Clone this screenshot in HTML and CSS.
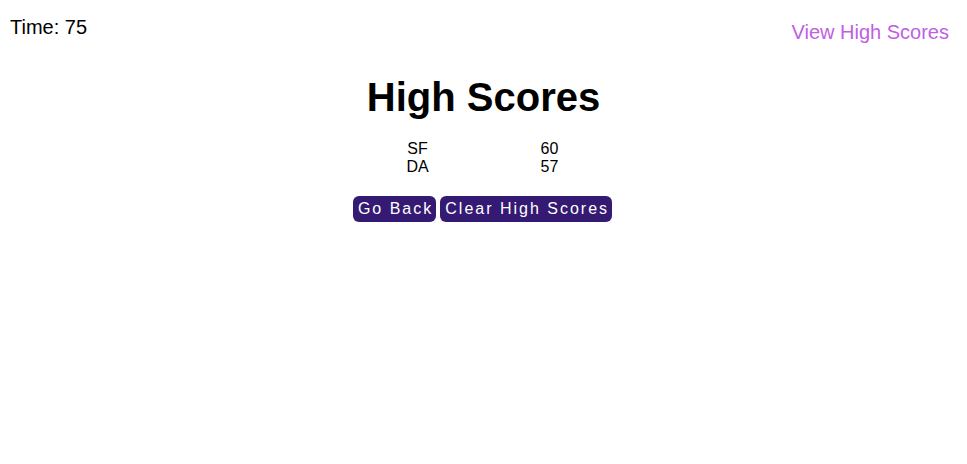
FILE: index.html
```html
<!DOCTYPE html>
<html>
<head>
<meta charset="utf-8">
<link rel="stylesheet" href="styles.css">
</head>
<body>
<header class="top">
  <div class="timer">Time: 75</div>
  <a class="view-link" href="#">View High Scores</a>
</header>
<main class="scores">
  <h1 class="title">High Scores</h1>
  <div class="score-table">
    <div class="cell">SF</div><div class="cell">60</div>
    <div class="cell">DA</div><div class="cell">57</div>
  </div>
  <div class="actions">
    <button class="btn">Go Back</button>
    <button class="btn">Clear High Scores</button>
  </div>
</main>
</body>
</html>
```
FILE: styles.css
```css
html, body {
  margin: 0;
  padding: 0;
  background: #ffffff;
  font-family: "Liberation Sans", Arial, sans-serif;
  color: #000000;
}

.top {
  display: flex;
  justify-content: space-between;
  align-items: flex-start;
  padding: 16px 18px 0 10px;
}

.timer {
  font-size: 20px;
  line-height: 23px;
}

.view-link {
  font-size: 20px;
  line-height: 23px;
  margin-top: 5px;
  color: #bf5fe3;
  text-decoration: none;
}

.scores {
  display: flex;
  flex-direction: column;
  align-items: center;
}

.title {
  font-size: 40px;
  line-height: 46px;
  font-weight: bold;
  margin: 30px 0 20px;
}

.score-table {
  display: grid;
  grid-template-columns: 132px 132px;
  font-size: 16px;
  line-height: 18px;
  text-align: center;
}

.actions {
  display: flex;
  gap: 4px;
  margin-top: 20px;
  margin-right: 2px;
}

.btn {
  font-family: "Liberation Sans", Arial, sans-serif;
  font-size: 16px;
  line-height: 18px;
  letter-spacing: 2px;
  color: #ffffff;
  background: #341a72;
  border: none;
  border-radius: 6px;
  padding: 4px 3px 4px 5px;
  margin: 0;
  cursor: pointer;
}
```
